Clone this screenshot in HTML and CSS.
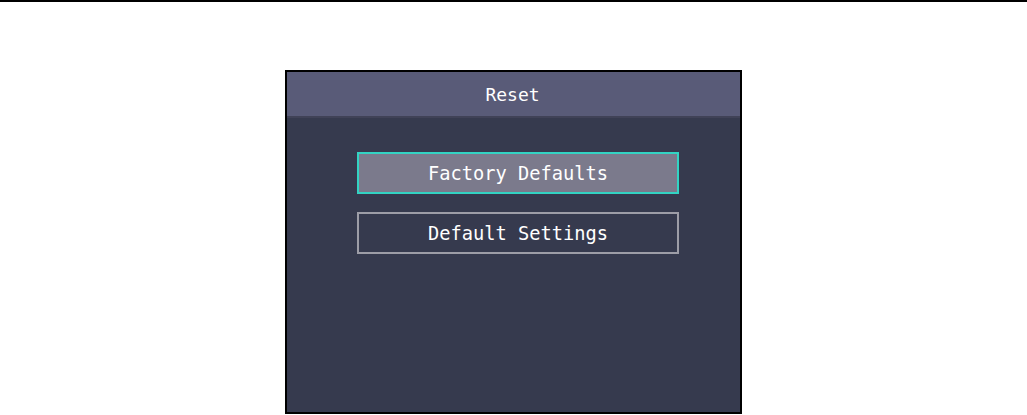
FILE: index.html
```html
<!DOCTYPE html>
<html>
<head>
<meta charset="utf-8">
<link rel="stylesheet" href="styles.css">
</head>
<body>
<div class="topline"></div>
<div class="stage">
  <div class="frame">
    <div class="header">Reset</div>
    <div class="content">
      <div class="btn btn-active">Factory Defaults</div>
      <div class="btn">Default Settings</div>
    </div>
  </div>
</div>
</body>
</html>
```
FILE: styles.css
```css
html, body {
  margin: 0;
  padding: 0;
  background: #ffffff;
}
body {
  width: 1027px;
  height: 415px;
  overflow: hidden;
  font-family: "DejaVu Sans Mono", "Liberation Mono", monospace;
}
.topline {
  height: 2px;
  background: #000;
}
.stage {
  display: flex;
  justify-content: center;
  padding-top: 68px;
}
.frame {
  width: 457px;
  height: 344px;
  box-sizing: border-box;
  border: 2px solid #000;
  border-right-width: 2px;
  display: flex;
  flex-direction: column;
  background: #363a4e;
}
.header {
  height: 44px;
  background: #595b78;
  border-bottom: 2px solid #404257;
  color: #ffffff;
  font-size: 18px;
  display: flex;
  align-items: center;
  justify-content: center;
  padding-right: 2px;
}
.content {
  flex: 1;
  padding: 34px 0 0 70px;
  display: flex;
  flex-direction: column;
  gap: 18px;
}
.btn {
  width: 322px;
  height: 42px;
  box-sizing: border-box;
  border: 2px solid #9d9da7;
  color: #ffffff;
  font-size: 18.7px;
  display: flex;
  align-items: center;
  justify-content: center;
}
.btn-active {
  background: #7b7a8c;
  border-color: #33d3c3;
}
```
